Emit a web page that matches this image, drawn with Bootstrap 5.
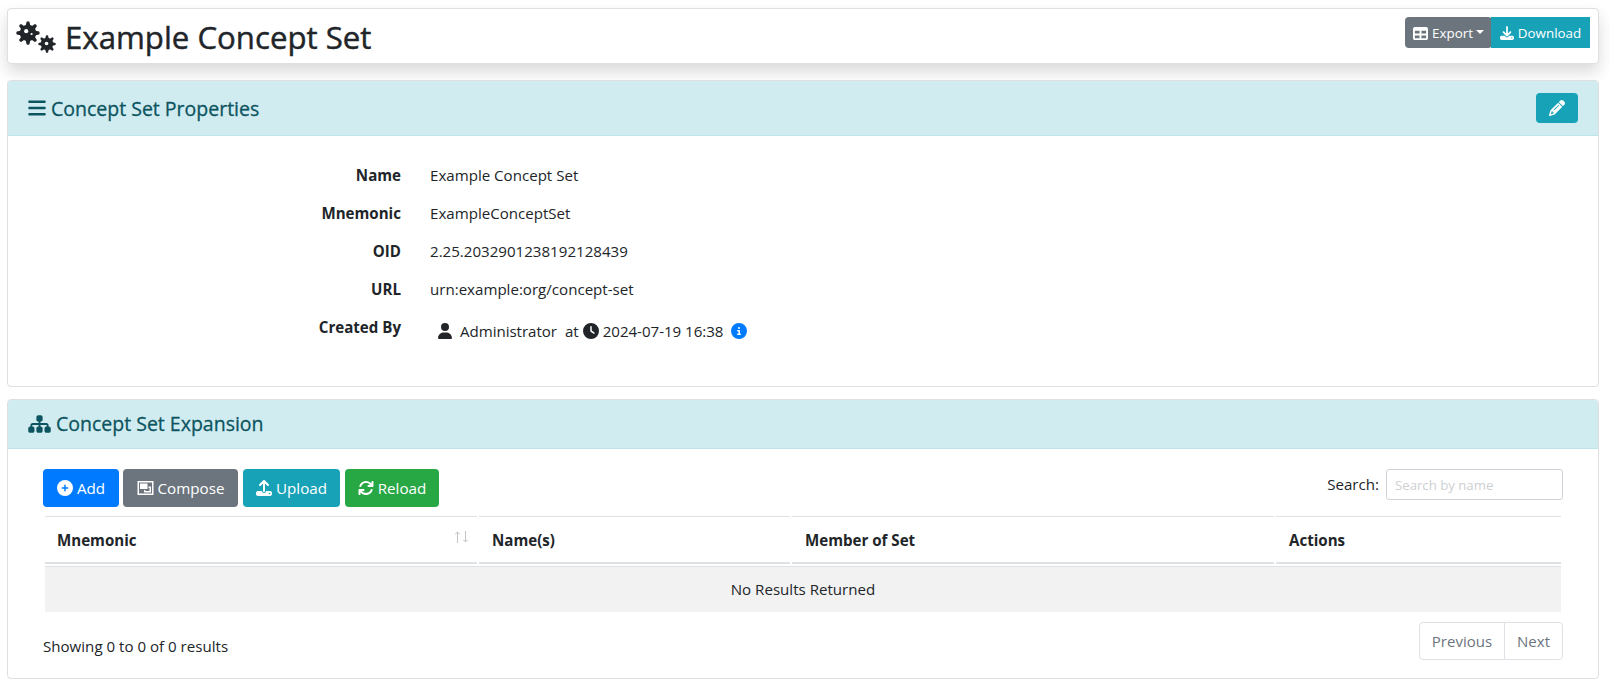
<!DOCTYPE html>
<html lang="en">
<head>
<meta charset="utf-8">
<title>Example Concept Set</title>
<link href="https://cdn.jsdelivr.net/npm/bootstrap@5.3.0/dist/css/bootstrap.min.css" rel="stylesheet">
<script src="https://cdn.jsdelivr.net/npm/bootstrap@5.3.0/dist/js/bootstrap.bundle.min.js"></script>
<style>
body{font-family:"Open Sans","Noto Sans",sans-serif;font-size:15.1px;line-height:24px;color:#212529;padding:8px 11px 10px 7px}
svg{fill:currentColor;flex:none;display:block}
.card{border-color:#dfdfdf;border-radius:4px}
.page-head{height:56px;padding:8px 8px 0 8px;box-shadow:0 8px 16px rgba(0,0,0,.15)}
.page-head h1{font-size:31.2px;line-height:38px;font-weight:400;-webkit-text-stroke:.45px;margin:1px 0 0 9px}
.gears{margin-top:-3px}
.props{margin-top:16px;height:307px}
.expansion{margin-top:12px;height:280px}
.bar{background:#d1ecf1;color:#0c5460;border-bottom:1px solid #bee5eb;padding:0 20px;border-radius:3px 3px 0 0}
.bar h2{font-size:19.5px;font-weight:400;-webkit-text-stroke:.3px;margin:0 0 0 5px;line-height:24px}
.props .bar{height:55px}
.props .bar h2{padding-top:1px}
.expansion .bar{height:49px}
.btn{--bs-btn-font-size:15.2px;--bs-btn-color:#fff;--bs-btn-hover-color:#fff;--bs-btn-border-width:0;--bs-btn-border-radius:4px;height:38px;padding:0;gap:4px;display:inline-flex;align-items:center;justify-content:center}
.btn-sm{--bs-btn-font-size:13.4px;height:31px;padding-top:1px}
.btn-info{--bs-btn-bg:#17a2b8;--bs-btn-hover-bg:#138496}
.btn-secondary{--bs-btn-bg:#6c757d}
.btn-primary{--bs-btn-bg:#007bff}
.btn-success{--bs-btn-bg:#28a745}
.export{width:87px}.dl{width:99px;border-radius:0}.edit{width:42px;height:30px}
.export.dropdown-toggle::after{margin-left:-1px;margin-top:-3px;border-width:4px 4px 0}
.add{width:76px}.compose{width:115px}.upload{width:97px}.reload{width:94px}
.tools{padding:20px 35px 0}
.tools .upload,.tools .reload{margin-left:5px}
.tools label{padding-top:0;margin-right:0;gap:7px}
.tools label span{margin-top:-2px}
.prop-list{padding-top:27px}
.prop-list dt{width:393px;text-align:right;font-weight:700;font-size:15.1px;height:38px}
.prop-list dd{margin:0 0 0 29px}
.prop-list .author{height:32px;letter-spacing:-.03px}
.grid-table{border-collapse:separate;border-spacing:2px;table-layout:fixed;width:1520px;margin:7px 0 0}
.grid-table th{border-top:1px solid #dee2e6;border-bottom:2px solid #dee2e6;height:48px;padding:0 12px;font-size:15.1px}
.grid-table th:nth-child(n+2){padding-left:13px}
.grid-table td{border-top:1px solid #dee2e6;background:#f2f2f2;height:46px;padding:0 0 1px;text-align:center}
.sort{fill:none;stroke:#bfc4c8;margin:-5px -4px 0 0}
.search{width:177px;height:31px;border:1px solid #ced4da;border-radius:3px;padding:0 8px;font-size:13.2px}
.search::placeholder{color:#cdd0d3;opacity:1}
.table-foot{padding-top:8px}
.page-link{color:#6c757d;border-color:#dee2e6;padding:6px 12px;font-size:15px;line-height:24px;height:38px}
.pagination{--bs-pagination-border-radius:4px}
</style>
</head>
<body>
<header class="card page-head d-flex flex-row align-items-start">
  <svg width="40" height="42" viewBox="0 0 40 42" class="gears"><defs><path id="tooth" d="M-2.6-6 L-1.4-11.2 Q0-12.2 1.4-11.2 L2.6-6Z"/><g id="teeth"><use href="#tooth"/><use href="#tooth" transform="rotate(45)"/><use href="#tooth" transform="rotate(90)"/><use href="#tooth" transform="rotate(135)"/><use href="#tooth" transform="rotate(180)"/><use href="#tooth" transform="rotate(225)"/><use href="#tooth" transform="rotate(270)"/><use href="#tooth" transform="rotate(315)"/></g></defs>
    <g transform="translate(12 19)"><use href="#teeth"/><circle r="8.3"/><circle cx="-1.8" cy="-1.8" r="2.1" fill="#fff"/><circle cx="3.6" cy="1" r="1.1" fill="#fff"/></g>
    <g transform="translate(31 30) scale(.75)"><use href="#teeth"/><circle r="8.3"/><circle cx="-.6" cy="-.6" r="2.4" fill="#fff"/></g>
  </svg>
  <h1>Example Concept Set</h1>
  <div class="btn-group ms-auto">
    <button class="btn btn-sm btn-secondary export dropdown-toggle"><svg width="15" height="15" viewBox="0 0 512 512"><path d="M64 256V160H224v96H64zm0 64H224v96H64V320zm224 96V320H448v96H288zM448 256H288V160H448v96zM64 32C28.7 32 0 60.7 0 96V416c0 35.3 28.7 64 64 64H448c35.3 0 64-28.7 64-64V96c0-35.3-28.7-64-64-64H64z"/></svg>Export</button>
    <button class="btn btn-sm btn-info dl"><svg width="14" height="14" viewBox="0 0 512 512"><path d="M288 32c0-17.7-14.3-32-32-32s-32 14.3-32 32V274.7l-73.4-73.4c-12.5-12.5-32.8-12.5-45.3 0s-12.5 32.8 0 45.3l128 128c12.5 12.5 32.8 12.5 45.3 0l128-128c12.5-12.5 12.5-32.8 0-45.3s-32.8-12.5-45.3 0L288 274.7V32zM64 352c-35.3 0-64 28.7-64 64v32c0 35.3 28.7 64 64 64H448c35.3 0 64-28.7 64-64V416c0-35.3-28.7-64-64-64H346.5l-45.3 45.3c-25 25-65.5 25-90.5 0L165.5 352H64zm368 56a24 24 0 1 1 0 48 24 24 0 1 1 0-48z"/></svg>Download</button>
  </div>
</header>

<section class="card props">
  <div class="bar d-flex align-items-center">
    <svg width="18" height="20" viewBox="0 0 448 512"><path d="M0 96C0 78.3 14.3 64 32 64H416c17.7 0 32 14.3 32 32s-14.3 32-32 32H32C14.3 128 0 113.7 0 96zM0 256c0-17.7 14.3-32 32-32H416c17.7 0 32 14.3 32 32s-14.3 32-32 32H32c-17.7 0-32-14.3-32-32zM448 416c0 17.7-14.3 32-32 32H32c-17.7 0-32-14.3-32-32s14.3-32 32-32H416c17.7 0 32 14.3 32 32z"/></svg>
    <h2>Concept Set Properties</h2>
    <button class="btn btn-info edit ms-auto" aria-label="Edit"><svg width="16" height="16" viewBox="0 0 512 512"><path d="M410.3 231l11.3-11.3-33.9-33.9-62.1-62.1L291.7 89.8l-11.3 11.3-22.6 22.6L58.6 322.9c-10.4 10.4-18 23.3-22.2 37.4L1 480.7c-2.5 8.4-.2 17.5 6.1 23.7s15.3 8.5 23.7 6.1l120.3-35.4c14.1-4.2 27-11.8 37.4-22.2L387.7 253.7 410.3 231zM160 399.4l-9.1 22.7c-4 3.1-8.5 5.4-13.3 6.9L59.4 452l23-78.1c1.4-4.9 3.8-9.4 6.9-13.3l22.7-9.1v32c0 8.8 7.2 16 16 16h32zM362.7 18.7L348.3 33.2 325.7 55.8 314.3 67.1l33.9 33.9 62.1 62.1 33.9 33.9 11.3-11.3 22.6-22.6 14.5-14.5c25-25 25-65.5 0-90.5L453.3 18.7c-25-25-65.5-25-90.5 0zm-47.4 168l-144 144c-6.2 6.2-16.4 6.2-22.6 0s-6.2-16.4 0-22.6l144-144c6.2-6.2 16.4-6.2 22.6 0s6.2 16.4 0 22.6z"/></svg></button>
  </div>
  <dl class="prop-list m-0">
    <div class="d-flex"><dt>Name</dt><dd>Example Concept Set</dd></div>
    <div class="d-flex"><dt>Mnemonic</dt><dd>ExampleConceptSet</dd></div>
    <div class="d-flex"><dt>OID</dt><dd>2.25.2032901238192128439</dd></div>
    <div class="d-flex"><dt>URL</dt><dd>urn:example:org/concept-set</dd></div>
    <div class="d-flex"><dt>Created By</dt><dd class="author d-flex align-items-center">
      <svg class="ms-2" width="14" height="16" viewBox="0 0 448 512"><path d="M224 256A128 128 0 1 0 224 0a128 128 0 1 0 0 256zm-45.7 48C79.8 304 0 383.8 0 482.3C0 498.7 13.3 512 29.7 512H418.3c16.4 0 29.7-13.3 29.7-29.7C448 383.8 368.2 304 269.7 304H178.3z"/></svg>
      <span class="ms-2">Administrator</span><span class="ms-2">at</span>
      <svg class="ms-1 me-1" width="16" height="16" viewBox="0 0 512 512"><path d="M256 0a256 256 0 1 1 0 512A256 256 0 1 1 256 0zM232 120V256c0 8 4 15.5 10.7 20l96 64c11 7.4 25.9 4.4 33.3-6.7s4.4-25.9-6.7-33.3L280 243.2V120c0-13.3-10.7-24-24-24s-24 10.7-24 24z"/></svg>
      <span>2024-07-19 16:38</span>
      <svg class="ms-2" color="#007bff" width="16" height="16" viewBox="0 0 512 512"><path d="M256 512A256 256 0 1 0 256 0a256 256 0 1 0 0 512zM216 336h24V272H216c-13.3 0-24-10.7-24-24s10.7-24 24-24h48c13.3 0 24 10.7 24 24v88h8c13.3 0 24 10.7 24 24s-10.7 24-24 24H216c-13.3 0-24-10.7-24-24s10.7-24 24-24zm40-208a32 32 0 1 1 0 64 32 32 0 1 1 0-64z"/></svg>
    </dd></div>
  </dl>
</section>

<section class="card expansion">
  <div class="bar d-flex align-items-center">
    <svg width="23" height="20" viewBox="0 0 576 512"><path d="M208 80c0-26.5 21.5-48 48-48h64c26.5 0 48 21.5 48 48v64c0 26.5-21.5 48-48 48h-8v40H464c30.9 0 56 25.1 56 56v32h8c26.5 0 48 21.5 48 48v64c0 26.5-21.5 48-48 48H464c-26.5 0-48-21.5-48-48V368c0-26.5 21.5-48 48-48h8V288c0-4.4-3.6-8-8-8H312v40h8c26.5 0 48 21.5 48 48v64c0 26.5-21.5 48-48 48H256c-26.5 0-48-21.5-48-48V368c0-26.5 21.5-48 48-48h8V280H112c-4.4 0-8 3.6-8 8v32h8c26.5 0 48 21.5 48 48v64c0 26.5-21.5 48-48 48H48c-26.5 0-48-21.5-48-48V368c0-26.5 21.5-48 48-48h8V288c0-30.9 25.1-56 56-56H264V192h-8c-26.5 0-48-21.5-48-48V80z"/></svg>
    <h2>Concept Set Expansion</h2>
  </div>
  <div class="tools d-flex align-items-start">
    <button class="btn btn-primary add"><svg width="16" height="16" viewBox="0 0 512 512"><path d="M256 512A256 256 0 1 0 256 0a256 256 0 1 0 0 512zM232 344V280H168c-13.3 0-24-10.7-24-24s10.7-24 24-24h64V168c0-13.3 10.7-24 24-24s24 10.7 24 24v64h64c13.3 0 24 10.7 24 24s-10.7 24-24 24H280v64c0 13.3-10.7 24-24 24s-24-10.7-24-24z"/></svg>Add</button>
    <button class="btn btn-secondary compose ms-1"><svg width="17" height="16" viewBox="0 0 17 16"><path fill-rule="evenodd" d="M.5 1h16v14H.5zM2 2.5v11h13v-11z"/><path fill-rule="evenodd" d="M3 3.5h7.5V9H3z"/><path d="M11.5 6.5H14v6H7V10h1.3v1h4.2V8h-1z"/></svg>Compose</button>
    <button class="btn btn-info upload"><svg width="16" height="16" viewBox="0 0 512 512"><path d="M288 109.3V352c0 17.7-14.3 32-32 32s-32-14.3-32-32V109.3l-73.4 73.4c-12.5 12.5-32.8 12.5-45.3 0s-12.5-32.8 0-45.3l128-128c12.5-12.5 32.8-12.5 45.3 0l128 128c12.5 12.5 12.5 32.8 0 45.3s-32.8 12.5-45.3 0L288 109.3zM64 352H192c0 35.3 28.7 64 64 64s64-28.7 64-64H448c35.3 0 64 28.7 64 64v32c0 35.3-28.7 64-64 64H64c-35.3 0-64-28.7-64-64V416c0-35.3 28.7-64 64-64zM432 456a24 24 0 1 0 0-48 24 24 0 1 0 0 48z"/></svg>Upload</button>
    <button class="btn btn-success reload"><svg width="16" height="16" viewBox="0 0 512 512"><path d="M105.1 202.6c7.7-21.8 20.2-42.3 37.8-59.8c62.5-62.5 163.8-62.5 226.3 0L386.3 160H336c-17.7 0-32 14.3-32 32s14.3 32 32 32H463.5c17.7 0 32-14.3 32-32V64c0-17.7-14.3-32-32-32s-32 14.3-32 32v51.2L414.4 97.6c-87.5-87.5-229.3-87.5-316.8 0C73.2 122 55.6 150.7 44.8 181.4c-5.9 16.7 2.9 34.9 19.5 40.8s34.9-2.9 40.8-19.5zM39 289.3c-5 1.5-9.8 4.2-13.7 8.2c-4 4-6.7 8.8-8.1 14c-.3 1.2-.6 2.5-.8 3.8c-.3 1.7-.4 3.4-.4 5.1V448c0 17.7 14.3 32 32 32s32-14.3 32-32V396.9l17.6 17.5c87.5 87.4 229.3 87.4 316.7 0c24.4-24.4 42.1-53.1 52.9-83.7c5.9-16.7-2.9-34.9-19.5-40.8s-34.9 2.9-40.8 19.5c-7.7 21.8-20.2 42.3-37.8 59.8c-62.5 62.5-163.8 62.5-226.3 0l-.1-.1L125.6 352H176c17.7 0 32-14.3 32-32s-14.3-32-32-32H48.4c-1.6 0-3.2.1-4.8.3s-3.1.5-4.6 1z"/></svg>Reload</button>
    <label class="ms-auto d-flex align-items-center"><span>Search:</span><input class="search" placeholder="Search by name"></label>
  </div>
  <div class="px-table" style="padding:0 35px">
    <table class="grid-table">
      <colgroup><col style="width:432px"><col style="width:311px"><col style="width:482px"><col style="width:285px"></colgroup>
      <thead><tr>
        <th><div class="d-flex justify-content-between align-items-center">Mnemonic<svg class="sort" width="14" height="12" viewBox="0 0 14 12"><path d="M2.5 12V1M.2 3.3 2.5 1l2.3 2.3M10.5 0v11M8.2 8.7l2.3 2.3 2.3-2.3"/></svg></div></th>
        <th>Name(s)</th><th>Member of Set</th><th>Actions</th>
      </tr></thead>
      <tbody><tr><td colspan="4">No Results Returned</td></tr></tbody>
    </table>
    <div class="table-foot d-flex justify-content-between">
      <div class="pt-1"><div class="pt-2">Showing 0 to 0 of 0 results</div></div>
      <ul class="pagination m-0">
        <li class="page-item"><a class="page-link">Previous</a></li>
        <li class="page-item"><a class="page-link">Next</a></li>
      </ul>
    </div>
  </div>
</section>
</body>
</html>
